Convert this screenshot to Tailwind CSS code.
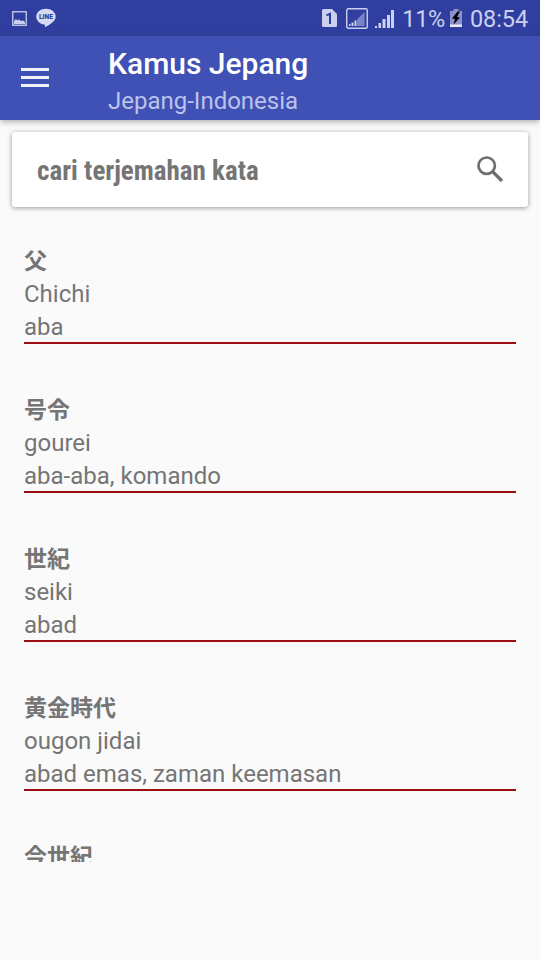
<!DOCTYPE html>
<html lang="id">
<head>
  <meta charset="UTF-8" />
  <meta name="viewport" content="width=device-width, initial-scale=1.0" />
  <title>Kamus Jepang</title>
  <script src="https://cdn.jsdelivr.net/npm/@tailwindcss/browser@4"></script>
</head>
<body class="h-[960px] w-[540px] overflow-hidden bg-[#fafafb] flex flex-col font-[Roboto,'Noto_Sans_CJK_JP',sans-serif]">
  <!-- STATUS BAR -->
  <div class="h-9 shrink-0 bg-[#303f9f] text-[#cbd0ee] flex items-center justify-between pl-3 pr-3">
    <div class="flex items-center gap-[9px]">
      <svg class="w-[15px] h-[15px]" viewBox="0 0 15 15" fill="none">
        <rect x=".75" y=".75" width="13.5" height="13.5" stroke="currentColor" stroke-width="1.3" />
        <path d="M2 13V10l2-2 1.500 1.500L7 8.500l2 1.500 2-.5 2 1.500v2z" fill="currentColor" />
      </svg>
      <svg class="w-5 h-5" viewBox="0 0 20 20">
        <path d="M10 .8C4.500.8.300 4.300.300 8.700c0 4 3.500 7.200 8 7.800.8.100.7 1.500.6 2.700 3-1.600 10.800-5.500 10.800-10.500C19.700 4.300 15.500.8 10 .8z" fill="#d5d9f2" />
        <text x="10" y="11" text-anchor="middle" textLength="14" lengthAdjust="spacingAndGlyphs" font-size="6.500" font-weight="900" fill="#303f9f">LINE</text>
      </svg>
    </div>
    <div class="flex items-center">
      <svg class="w-[15px] h-[18px] mr-[9px]" viewBox="0 0 15 18">
        <path d="M1.500 0H10l5 5v11.500a1.500 1.500 0 0 1-1.500 1.500h-12A1.500 1.500 0 0 1 0 16.500v-15A1.500 1.500 0 0 1 1.500 0z" fill="currentColor" />
        <path d="M4.500 6.300 8 4.800V15" stroke="#303f9f" stroke-width="2" fill="none" />
      </svg>
      <svg class="w-[22px] h-[21px] mr-[7px]" viewBox="0 0 22 21">
        <rect x=".75" y=".75" width="20.500" height="19.500" rx="1.500" fill="none" stroke="currentColor" stroke-width="1.400" />
        <path d="M11 11.500 18.500 4v14H11z" fill="#7b84c9" />
        <path d="M3 16h1.500v2H3zM5.500 14.500h2V18h-2zM8.500 12.500h2V18h-2z" fill="currentColor" />
      </svg>
      <svg class="w-[19px] h-[19px] mr-[8px]" viewBox="0 0 19 19" fill="currentColor">
        <path d="M0 17h2v2H0zM3.500 14h2.500v5H3.500zM7.500 10h3v9h-3zM12 6h3v13h-3zM16 1h3v18h-3z" />
      </svg>
      <span class="text-[23.5px] leading-9 mr-[5px] pt-[2px] tracking-[-0.3px]">11%</span>
      <svg class="w-3 h-[18px] mr-[8px]" viewBox="0 0 12 18">
        <path d="M3.500 0h5v2H12v16H0V2h3.500z" fill="#8b93cf" />
        <path d="M0 15.500h12V18H0z" fill="#e8eaf8" />
        <path d="M7.500 2.500 2 9.500l3 .5-1.500 5.500L10 8.500 7 8l3-5.500z" fill="#000" />
      </svg>
      <span class="text-[23.5px] leading-9 pt-[2px] tracking-[-0.1px]">08:54</span>
    </div>
  </div>

  <!-- TOOLBAR -->
  <header class="relative h-[84px] shrink-0 bg-[#3f51b5] flex items-center shadow-[0_2px_6px_rgba(0,0,0,0.3)]">
    <svg class="w-7 h-5 ml-[21px] mr-[59px]" viewBox="0 0 28 20" fill="#f1f2fa">
      <path d="M0 0h28v3H0zM0 8h28v3H0zM0 16h28v3H0z" />
    </svg>
    <div class="pt-[7px]">
      <h1 class="text-[30px] leading-[38px] font-medium text-white">Kamus Jepang</h1>
      <p class="text-[24px] leading-[36px] text-[#bcc3ea]">Jepang-Indonesia</p>
    </div>
  </header>

  <!-- PENCARIAN -->
  <div class="mt-3 mx-3 h-[75px] shrink-0 bg-white rounded-[3px] shadow-[0_1px_5px_rgba(0,0,0,0.4)] flex items-center justify-between pl-[25px] pr-6">
    <span class="text-[27px] font-bold font-stretch-condensed text-[#757575] pt-[4px]">cari terjemahan kata</span>
    <svg class="w-[27px] h-[27px]" viewBox="0 0 27 27" fill="none" stroke="#6f6f6f">
      <circle cx="9.700" cy="9.700" r="8.200" stroke-width="2.700" />
      <path d="M15.500 15.500 25 25" stroke-width="3.200" />
    </svg>
  </div>

  <!-- DAFTAR KATA -->
  <main id="wordList" class="mt-[37px] h-[618px] shrink-0 overflow-hidden px-6 flex flex-col gap-[49px] text-[24px] leading-[33px] text-[#757575]"></main>

  <script>
    const words = [
      { kanji: "父", romaji: "Chichi", arti: "aba" },
      { kanji: "号令", romaji: "gourei", arti: "aba-aba, komando" },
      { kanji: "世紀", romaji: "seiki", arti: "abad" },
      { kanji: "黄金時代", romaji: "ougon jidai", arti: "abad emas, zaman keemasan" },
      { kanji: "今世紀", romaji: "", arti: "" },
    ];

    document.getElementById("wordList").innerHTML = words
      .map((w) => `
        <div class="h-[100px] shrink-0 pt-[2px] border-b-2 border-[#9b0f12]">
          <p class="h-8 leading-8 text-[23px] font-bold">${w.kanji}</p>
          <p class="h-[33px]">${w.romaji}</p>
          <p class="h-[33px]">${w.arti}</p>
        </div>`)
      .join("");
  </script>
</body>
</html>
